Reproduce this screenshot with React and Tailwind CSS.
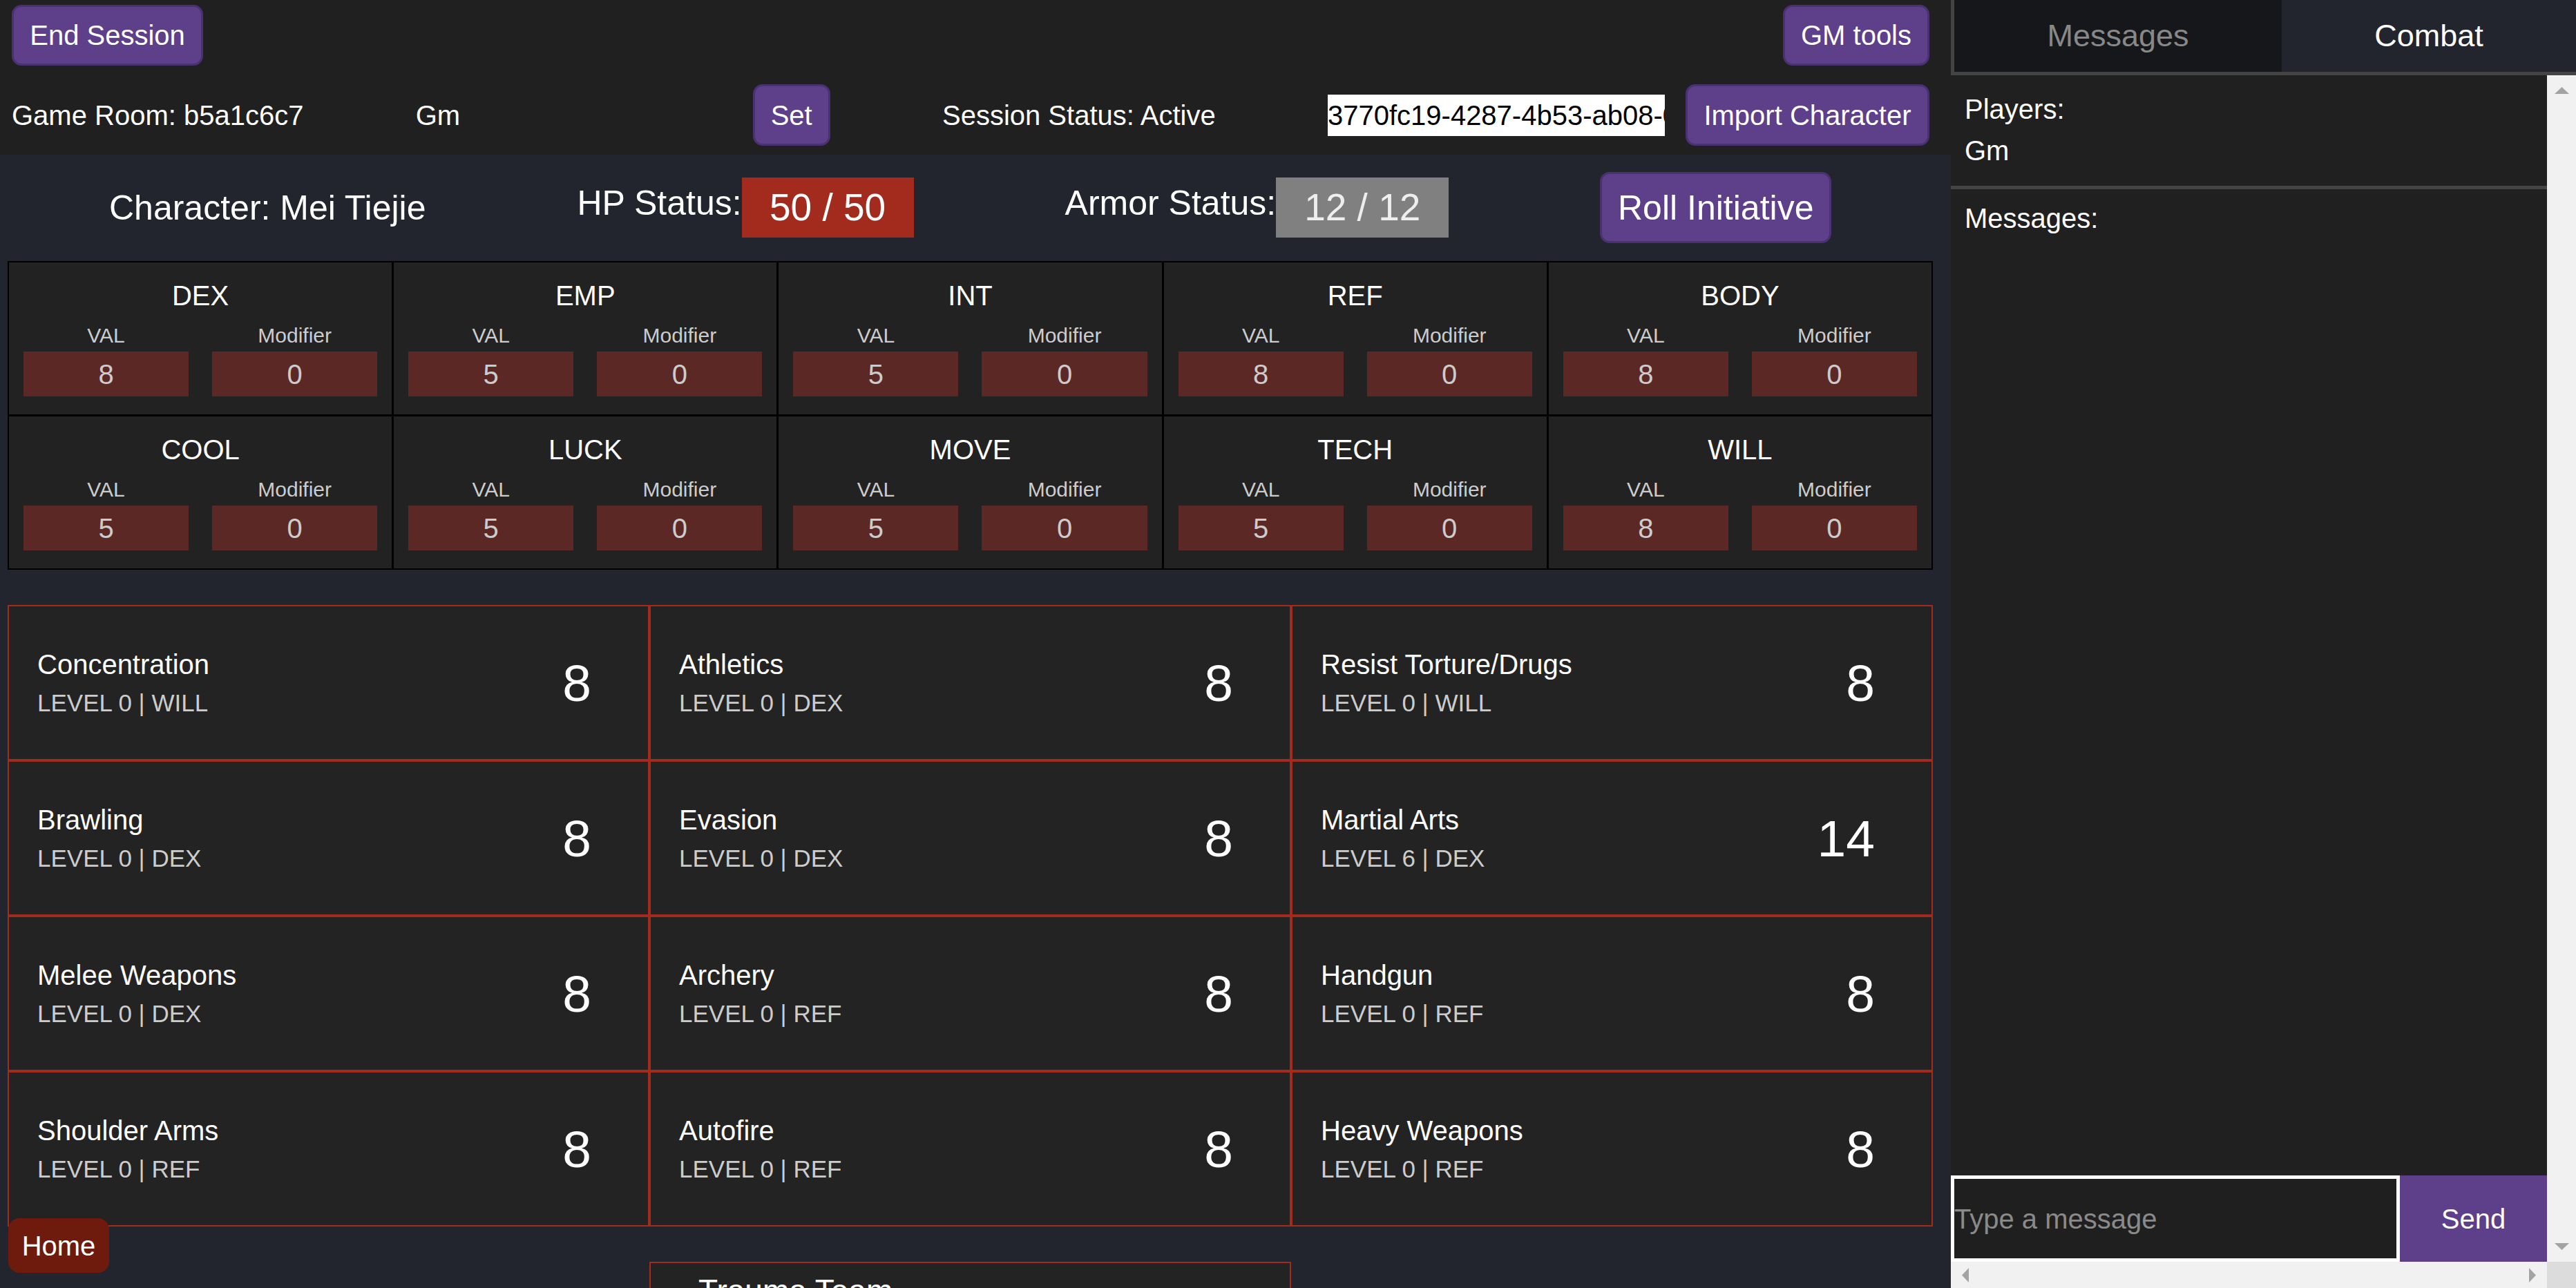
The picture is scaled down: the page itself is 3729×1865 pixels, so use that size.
import React from "react";

const stats = [
  ["DEX", 8], ["EMP", 5], ["INT", 5], ["REF", 8], ["BODY", 8],
  ["COOL", 5], ["LUCK", 5], ["MOVE", 5], ["TECH", 5], ["WILL", 8],
];

const skills = [
  ["Concentration", 0, "WILL", 8],
  ["Athletics", 0, "DEX", 8],
  ["Resist Torture/Drugs", 0, "WILL", 8],
  ["Brawling", 0, "DEX", 8],
  ["Evasion", 0, "DEX", 8],
  ["Martial Arts", 6, "DEX", 14],
  ["Melee Weapons", 0, "DEX", 8],
  ["Archery", 0, "REF", 8],
  ["Handgun", 0, "REF", 8],
  ["Shoulder Arms", 0, "REF", 8],
  ["Autofire", 0, "REF", 8],
  ["Heavy Weapons", 0, "REF", 8],
];

function Btn({ className = "", children }) {
  return (
    <button
      className={
        "flex items-center justify-center bg-[#5d3f8a] border-[3px] border-[#4a3272] rounded-[14px] text-white text-[40px] leading-[46px] " +
        className
      }
    >
      {children}
    </button>
  );
}

function StatCell({ name, val }) {
  return (
    <div className="bg-[#222222] pt-[25px] pb-[26px] flex flex-col">
      <div className="text-center text-white text-[40px] leading-[46px]">{name}</div>
      <div className="grid grid-cols-2 gap-x-[34px] px-[21px] mt-[18px]">
        <div className="text-center text-[#cccccc] text-[30px] leading-[34px]">VAL</div>
        <div className="text-center text-[#cccccc] text-[30px] leading-[34px]">Modifier</div>
        <div className="mt-[6px] h-[65px] bg-[#5c2826] flex items-center justify-center text-[#cccccc] text-[40px]">{val}</div>
        <div className="mt-[6px] h-[65px] bg-[#5c2826] flex items-center justify-center text-[#cccccc] text-[40px]">0</div>
      </div>
    </div>
  );
}

function SkillCard({ name, level, stat, value }) {
  return (
    <div className="w-1/3 h-[225px] border-2 border-[#a32b1e] bg-[#232323] flex items-center justify-between pl-[41px] pr-[82px]">
      <div className="flex flex-col">
        <div className="text-white text-[40px] leading-[46px]">{name}</div>
        <div className="mt-[13px] text-[#cccccc] text-[35px] leading-[40px]">
          LEVEL {level} | {stat}
        </div>
      </div>
      <div className="text-white text-[75px] leading-[86px]">{value}</div>
    </div>
  );
}

export default function App() {
  return (
    <div className="w-[3729px] h-[1865px] overflow-hidden flex font-['Liberation_Sans',Arial,sans-serif]">
      {/* Main column */}
      <div className="w-[2824px] h-full overflow-hidden flex flex-col bg-[#22252e]">
        {/* Header */}
        <div className="bg-[#202020] h-[224px] shrink-0 pl-[17px] pr-[31px] pt-[7px] flex flex-col">
          <div className="flex justify-between">
            <Btn className="w-[277px] h-[88px]">End Session</Btn>
            <Btn className="w-[212px] h-[88px]">GM tools</Btn>
          </div>
          <div className="mt-[27px] h-[89px] flex items-center justify-between text-white text-[40px]">
            <span>Game Room: b5a1c6c7</span>
            <div className="flex items-center">
              <input
                defaultValue="Gm"
                className="w-[488px] h-[60px] bg-transparent text-white text-[40px] outline-none p-0"
              />
              <Btn className="w-[112px] h-[89px]">Set</Btn>
            </div>
            <span>Session Status: Active</span>
            <div className="flex items-center gap-[30px]">
              <input
                defaultValue="3770fc19-4287-4b53-ab08-0f2c9d1e7a55"
                className="w-[488px] h-[60px] bg-white text-black text-[40px] outline-none p-0"
              />
              <Btn className="w-[353px] h-[89px]">Import Character</Btn>
            </div>
          </div>
        </div>

        {/* Character row */}
        <div className="pt-[25px] shrink-0">
          <div className="h-[103px] flex items-center pl-[158px] gap-[219px] text-white">
            <div className="text-[50px] leading-[58px]">Character: Mei Tiejie</div>
            <div className="flex items-start">
              <div className="text-[50px] leading-[58px] mt-[8px]">HP Status:</div>
              <div className="h-[87px] w-[249px] bg-[#a32b1e] flex items-center justify-center text-[55px]">50 / 50</div>
            </div>
            <div className="flex items-start">
              <div className="text-[50px] leading-[58px] mt-[8px]">Armor Status:</div>
              <div className="h-[87px] w-[250px] bg-[#808080] flex items-center justify-center text-[55px] text-[#eeeeee]">12 / 12</div>
            </div>
            <Btn className="w-[335px] h-[103px]">
              <span className="text-[50px] leading-[58px]">Roll Initiative</span>
            </Btn>
          </div>
        </div>

        {/* Stats grid */}
        <div className="mt-[26px] ml-[11px] mr-[26px] grid grid-cols-5 bg-black gap-[3px] p-[2px] shrink-0">
          {stats.map(([n, v]) => (
            <StatCell key={n} name={n} val={v} />
          ))}
        </div>

        {/* Skills */}
        <div className="mt-[51px] ml-[11px] mr-[26px] flex flex-wrap shrink-0">
          {skills.map(([n, l, s, v]) => (
            <SkillCard key={n} name={n} level={l} stat={s} value={v} />
          ))}
        </div>

        <div className="mt-[51px] ml-[11px] mr-[26px] flex justify-center shrink-0">
          <div className="w-1/3 h-[225px] border-2 border-[#a32b1e] bg-[#232323] pl-[69px] pt-[14px]">
            <div className="text-white text-[46px] leading-[53px]">Trauma Team</div>
          </div>
        </div>
      </div>

      {/* Right panel */}
      <div className="w-[905px] h-full flex flex-col bg-[#202020]">
        <div className="h-[109px] shrink-0 flex border-l-[5px] border-b-[5px] border-[#444444]">
          <div className="w-[474px] bg-[#16171b] flex items-center justify-center text-[#888888] text-[45px]">
            Messages
          </div>
          <div className="flex-1 bg-[#22252e] flex items-center justify-center text-white text-[45px]">
            Combat
          </div>
        </div>
        <div className="flex-1 flex flex-col min-h-0">
          <div className="flex-1 flex min-h-0">
            <div className="flex-1 flex flex-col min-w-0">
              <div className="px-[20px] pt-[26px] pb-[28px] flex flex-col gap-[14px] text-white text-[40px] leading-[46px]">
                <div>Players:</div>
                <div>Gm</div>
              </div>
              <div className="h-[5px] bg-[#444444]" />
              <div className="flex-1 px-[20px] pt-[19px] text-white text-[40px] leading-[46px]">Messages:</div>
              <div className="h-[125px] flex shrink-0">
                <input
                  placeholder="Type a message"
                  className="flex-1 min-w-0 border-[5px] border-white bg-[#1f1f1f] text-white text-[40px] placeholder:text-[#8a8a8a] outline-none p-0"
                />
                <button className="w-[213px] bg-[#5d3f8a] text-white text-[40px]">Send</button>
              </div>
            </div>
            <div className="w-[42px] bg-[#f1f1f1] flex flex-col justify-between items-center py-[17px]">
              <svg width="21" height="10" viewBox="0 0 21 10">
                <polygon points="10.5,0 21,10 0,10" fill="#a3a3a3" />
              </svg>
              <svg width="21" height="10" viewBox="0 0 21 10">
                <polygon points="0,0 21,0 10.5,10" fill="#a3a3a3" />
              </svg>
            </div>
          </div>
          <div className="h-[38px] flex shrink-0">
            <div className="flex-1 bg-[#f1f1f1] flex items-center justify-between px-[16px]">
              <svg width="10" height="21" viewBox="0 0 10 21">
                <polygon points="0,10.5 10,0 10,21" fill="#a3a3a3" />
              </svg>
              <svg width="10" height="21" viewBox="0 0 10 21">
                <polygon points="0,0 10,10.5 0,21" fill="#a3a3a3" />
              </svg>
            </div>
            <div className="w-[42px] bg-[#dcdcdc]" />
          </div>
        </div>
      </div>

      {/* Home button */}
      <button className="fixed left-[12px] top-[1764px] w-[146px] h-[79px] rounded-[16px] bg-[#6e1a0c] text-white text-[40px] font-['Liberation_Sans',Arial,sans-serif]">
        Home
      </button>
    </div>
  );
}
